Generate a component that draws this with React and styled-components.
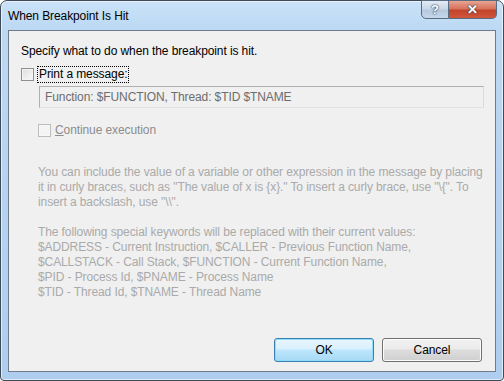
import React from 'react';
import styled, { createGlobalStyle } from 'styled-components';

const Global = createGlobalStyle`
  html, body { margin: 0; padding: 0; background: #ffffff; }
  body { font-family: "Liberation Sans", Arial, sans-serif; font-size: 12px; letter-spacing: -0.1px; }
`;

const Window = styled.div`
  width: 504px;
  height: 381px;
  box-sizing: border-box;
  border: 1px solid #3e4a57;
  border-radius: 7px 7px 4px 4px;
  background: linear-gradient(180deg, #c9e2f8 0%, #bcd8f3 30px, #aecdef 100%);
  display: flex;
  flex-direction: column;
  box-shadow: inset 0 0 0 1px rgba(255, 255, 255, 0.6);
`;

const TitleBar = styled.div`
  height: 29px;
  display: flex;
  align-items: flex-start;
  justify-content: space-between;
  padding-left: 7px;
`;

const Title = styled.div`
  margin-top: 8px;
  font-size: 12px;
  color: #000;
`;

const Caption = styled.div`
  display: flex;
  margin-right: 6px;
  margin-top: -1px;
`;

const CapButton = styled.div`
  width: ${p => p.$w}px;
  height: 19px;
  box-sizing: border-box;
  border: 1px solid #5a6c80;
  display: flex;
  align-items: center;
  justify-content: center;
  font-weight: bold;
  font-size: 13px;
  color: #fff;
  ${p => p.$close ? `
    background: linear-gradient(180deg, #e8a493 0%, #d6735c 45%, #c2442a 55%, #d0563b 100%);
    border-radius: 0 0 5px 0;
    border-left: none;
  ` : `
    background: linear-gradient(180deg, #e1ebf5 0%, #c9d8e8 45%, #b5c9de 55%, #c6d7ea 100%);
    border-radius: 0 0 0 5px;
  `}
  text-shadow: 0 0 2px #27384c, 0 0 1px #27384c;
`;

const Client = styled.div`
  flex: 1;
  margin: 0 7px 8px 7px;
  border: 1px solid #6f7c8a;
  background: #f0f0f0;
  display: flex;
  flex-direction: column;
  padding: 13px 11px 0 12px;
  line-height: 15px;
  color: #000;
`;

const Row = styled.label`
  display: flex;
  align-items: center;
  gap: 4px;
  margin-left: ${p => p.$indent || 0}px;
  color: ${p => p.$disabled ? '#8d8d8d' : '#000'};
`;

const Box = styled.span`
  width: 13px;
  height: 13px;
  box-sizing: border-box;
  border: 1px solid ${p => p.$disabled ? '#bcbcbc' : '#8f8f8f'};
  background: ${p => p.$disabled ? '#f4f4f4' : 'linear-gradient(135deg, #dcdcdc, #fbfbfb)'};
  box-shadow: inset 0 0 0 1px ${p => p.$disabled ? '#f7f7f7' : '#f4f4f4'};
`;

const Focus = styled.span`
  outline: 1px dotted #000;
  outline-offset: 0;
  padding: 0 1px;
`;

const Field = styled.div`
  margin: 4px 0 0 18px;
  height: 22px;
  box-sizing: border-box;
  border: 1px solid #b0b0b0;
  border-right-color: #dadada;
  border-bottom-color: #e3e3e3;
  padding: 0 5px;
  display: flex;
  align-items: center;
  color: #6d6d6d;
`;

const Help = styled.div`
  margin: 27px 0 0 17px;
  color: #aaaaaa;
  white-space: nowrap;
`;

const Para = styled.p`
  margin: 0 0 15px 0;
`;

const Footer = styled.div`
  margin-top: auto;
  display: flex;
  justify-content: flex-end;
  gap: 8px;
  padding-bottom: 9px;
  margin-right: 2px;
`;

const Button = styled.button`
  width: 100px;
  height: 24px;
  font-family: inherit;
  font-size: 12px;
  letter-spacing: inherit;
  color: #000;
  border-radius: 3px;
  border: 1px solid ${p => p.$default ? '#3c7fb1' : '#707070'};
  background: ${p => p.$default
    ? 'linear-gradient(180deg, #eaf6fd 0%, #d9f0fc 45%, #bee6fd 50%, #a7d9f5 100%)'
    : 'linear-gradient(180deg, #f2f2f2 0%, #ebebeb 45%, #dddddd 50%, #cfcfcf 100%)'};
  box-shadow: inset 0 0 0 1px ${p => p.$default ? '#8fdcfa' : '#fcfcfc'};
  padding: 0;
`;

const HELP_1 = [
  'You can include the value of a variable or other expression in the message by placing',
  'it in curly braces, such as "The value of x is {x}." To insert a curly brace, use "\\{". To',
  'insert a backslash, use "\\\\".',
];

const HELP_2 = [
  'The following special keywords will be replaced with their current values:',
  '$ADDRESS - Current Instruction, $CALLER - Previous Function Name,',
  '$CALLSTACK - Call Stack, $FUNCTION - Current Function Name,',
  '$PID - Process Id, $PNAME - Process Name',
  '$TID - Thread Id, $TNAME - Thread Name',
];

const Lines = ({ lines }) => (
  <Para>
    {lines.map((l, i) => <div key={i}>{l}</div>)}
  </Para>
);

export default function App() {
  return (
    <>
      <Global />
      <Window>
        <TitleBar>
          <Title>When Breakpoint Is Hit</Title>
          <Caption>
            <CapButton $w={28}>?</CapButton>
            <CapButton $w={48} $close>✕</CapButton>
          </Caption>
        </TitleBar>
        <Client>
          <div>Specify what to do when the breakpoint is hit.</div>
          <Row style={{ marginTop: 8 }}>
            <Box />
            <Focus>Print a message:</Focus>
          </Row>
          <Field>Function: $FUNCTION, Thread: $TID $TNAME</Field>
          <Row $indent={17} $disabled style={{ marginTop: 15 }}>
            <Box $disabled />
            <span><u>C</u>ontinue execution</span>
          </Row>
          <Help>
            <Lines lines={HELP_1} />
            <Lines lines={HELP_2} />
          </Help>
          <Footer>
            <Button $default>OK</Button>
            <Button>Cancel</Button>
          </Footer>
        </Client>
      </Window>
    </>
  );
}
